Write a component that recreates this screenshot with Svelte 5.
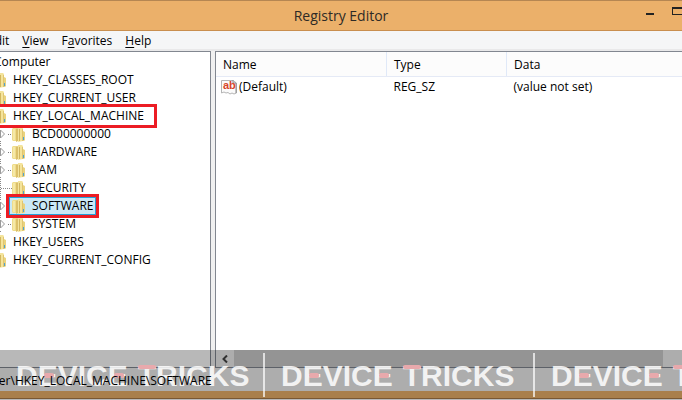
<script lang="ts">
	type Key = {
		name: string;
		leaf?: boolean;
		children?: Key[];
	};

	const menus = [
		{ before: '', key: 'F', after: 'ile' },
		{ before: '', key: 'E', after: 'dit' },
		{ before: '', key: 'V', after: 'iew' },
		{ before: 'F', key: 'a', after: 'vorites' },
		{ before: '', key: 'H', after: 'elp' }
	];

	const root: Key = {
		name: 'Computer',
		children: [
			{ name: 'HKEY_CLASSES_ROOT' },
			{ name: 'HKEY_CURRENT_USER' },
			{
				name: 'HKEY_LOCAL_MACHINE',
				children: [
					{ name: 'BCD00000000' },
					{ name: 'HARDWARE' },
					{ name: 'SAM' },
					{ name: 'SECURITY', leaf: true },
					{ name: 'SOFTWARE' },
					{ name: 'SYSTEM' }
				]
			},
			{ name: 'HKEY_USERS' },
			{ name: 'HKEY_CURRENT_CONFIG' }
		]
	};

	const values = [{ name: '(Default)', type: 'REG_SZ', data: '(value not set)' }];
	const marked = ['HKEY_LOCAL_MACHINE', 'SOFTWARE'];

	let selected = $state('SOFTWARE');
</script>

{#snippet folder()}
	<svg class="folder" viewBox="0 0 13 15" aria-hidden="true">
		<path d="M0 2 L1 1 H5 V14 H1 L0 13Z" fill="#efdc8a" />
		<path d="M1 2 H3 V13 H1Z" fill="#f5e8a8" />
		<path d="M4 2 L6 1 V14 L4 15Z" fill="#dcc06a" />
		<path d="M6 0 H10 L11 1 V14 L6 15Z" fill="#f4e49c" />
		<path d="M7 2 H8 V14 H7Z" fill="#d3b75f" />
		<path d="M10 2 L11 2 V14 H10Z" fill="#e0c570" />
		<path d="M11 4 L13 5 V13 L12 14 H11Z" fill="#ead37e" />
		<path d="M11 10 H12 V13 H11Z" fill="#4da3d4" />
	</svg>
{/snippet}

{#snippet node(item: Key)}
	<li>
		<div class="row">
			<span class="branch" class:leaf={item.leaf}>
				{#if !item.leaf}
					<svg viewBox="0 0 8 18" aria-hidden="true">
						<path d="M3 0h1v1H3zM3 2h1v1H3zM3 16h1v1H3z" fill="#888" />
						<path d="M3.5 5 L7.5 9 L3.5 13Z" fill="#fff" stroke="#9a9a9a" />
					</svg>
				{/if}
			</span>
			<button
				class="label"
				class:selected={selected === item.name}
				class:marked={marked.includes(item.name)}
				class:wide={item.children}
				onclick={() => (selected = item.name)}
			>
				{@render folder()}
				<span>{item.name}</span>
			</button>
		</div>
		{#if item.children}
			<ul>
				{#each item.children as child}
					{@render node(child)}
				{/each}
			</ul>
		{/if}
	</li>
{/snippet}

<div class="page">
	<div class="window">
		<header class="titlebar">
			<h1>Registry Editor</h1>
			<div class="controls">
				<button aria-label="Minimize">
					<svg width="12" height="10" viewBox="0 0 12 10"><path d="M2 6h8v2H2z" fill="#222" /></svg>
				</button>
				<button aria-label="Maximize">
					<svg width="12" height="10" viewBox="0 0 12 10">
						<path d="M0 0h12v8H0zM1 2v5h10V2z" fill="#222" fill-rule="evenodd" />
					</svg>
				</button>
				<button class="close" aria-label="Close">
					<svg width="10" height="10" viewBox="0 0 10 10"><path d="M1 1l8 8M9 1l-8 8" stroke="#fff" stroke-width="2" /></svg>
				</button>
			</div>
		</header>

		<nav class="menubar">
			{#each menus as menu}
				<button>{menu.before}<u>{menu.key}</u>{menu.after}</button>
			{/each}
		</nav>

		<main class="panes">
			<section class="pane">
				<ul class="tree">
					{@render node(root)}
				</ul>
			</section>

			<section class="pane list">
				<table>
					<thead>
						<tr>
							<th class="name">Name</th>
							<th class="type">Type</th>
							<th>Data</th>
						</tr>
					</thead>
					<tbody>
						{#each values as value}
							<tr>
								<td class="name">
									<span class="value">
										<svg width="16" height="16" viewBox="0 0 16 16" aria-hidden="true">
											<path d="M0.5 1.5H12L15.500 4V14L13 15L11 14L9 15L7 13.500L5 14L3 13L0.500 14Z" fill="#fbfbfb" stroke="#b5b5b5" />
											<path d="M12 1V4H15V14" fill="none" stroke="#8c8c8c" />
											<text x="2" y="10">ab</text>
										</svg>
										{value.name}
									</span>
								</td>
								<td>{value.type}</td>
								<td>{value.data}</td>
							</tr>
						{/each}
					</tbody>
				</table>
				<div class="scrollbar">
					<button aria-label="Scroll left">
						<svg width="8" height="8" viewBox="0 0 8 8"><path d="M6 0.5 L2.500 4 L6 7.500" fill="none" stroke="#444" stroke-width="2" /></svg>
					</button>
					<div class="thumb"></div>
				</div>
			</section>
		</main>

		<footer class="status"><span>Computer\HKEY_LOCAL_MACHINE\SOFTWARE</span></footer>
	</div>

	<div class="watermark">
		{#each [1, 2, 3] as copy (copy)}
			<div class="brand">
				<span>D<i class="dash">E</i>VIC<i class="dash">E</i></span>
				<span><i class="bar">T</i>RICKS</span>
			</div>
		{/each}
	</div>
</div>

<style>
	:global(body) {
		margin: 0;
		background: #fff;
	}

	.page {
		position: relative;
		overflow: hidden;
		height: 100vh;
		font-family: 'Open Sans', 'Noto Sans', sans-serif;
		font-size: 12px;
		color: #000;
	}

	/* the window is larger than the page and runs off both sides */
	.window {
		box-sizing: border-box;
		display: flex;
		flex-direction: column;
		height: calc(100vh - 1px);
		margin: 0 -56px;
		padding: 0 8px 7px;
		background: #ebb06a;
		border-top: 1px solid #b58652;
		border-bottom: 1px solid #a87b49;
	}

	button {
		padding: 0;
		border: 0;
		background: none;
		font: inherit;
		color: inherit;
	}

	.titlebar {
		display: grid;
		grid-template-columns: 1fr auto 1fr;
		height: 29px;
		margin: 0 -8px;
		border-bottom: 1px solid #c98f4f;
	}

	h1 {
		grid-column: 2;
		margin: 0;
		font-size: 14px;
		font-weight: 400;
		line-height: 30px;
		color: #2e2a26;
	}

	.controls {
		display: flex;
		justify-content: flex-end;
	}

	.controls button {
		width: 28px;
		height: 22px;
	}

	.controls .close {
		width: 46px;
		background: #c75050;
	}

	.controls svg {
		display: block;
		margin: 0 auto;
	}

	.menubar {
		display: flex;
		height: 18px;
		background: #f5f6f7;
		border-bottom: 2px solid #e9e9ea;
	}

	.menubar button {
		padding: 0 6px 0 7px;
		line-height: 20px;
	}

	.menubar button:first-child {
		padding-left: 4px;
	}

	u {
		text-underline-offset: 2px;
	}

	.panes {
		flex: 1;
		display: grid;
		grid-template-columns: 259px 1fr;
		gap: 4px;
		background: #f0f0f0;
	}

	.pane {
		min-width: 0;
		background: #fff;
		border: 1px solid #828790;
	}

	ul {
		margin: 0;
		padding: 0 0 0 19px;
		list-style: none;
	}

	.tree {
		padding: 1px 0 0 2px;
	}

	.row {
		display: flex;
		height: 18px;
	}

	.branch {
		display: flex;
		align-items: center;
		width: 19px;
		margin-right: -3px;
		background: linear-gradient(90deg, #fff 15px, transparent 15px) 0 0 / 100% 100% no-repeat,
			repeating-linear-gradient(90deg, #777 0 1px, #fff 1px 2px) 1px 9px / 100% 1px no-repeat;
	}

	.branch svg {
		width: 8px;
		height: 18px;
		margin-left: 4px;
	}

	.branch.leaf {
		background: repeating-linear-gradient(#888 0 1px, #fff 1px 2px) 7px 0 / 1px 100% no-repeat,
			repeating-linear-gradient(90deg, #888 0 1px, #fff 1px 2px) 8px 9px / 100% 1px no-repeat;
	}

	.label {
		position: relative;
		display: flex;
		align-items: center;
		gap: 7px;
		padding: 0 2px;
		border: 1px solid transparent;
		line-height: 16px;
	}

	.label.selected {
		background: #cbe8f6;
		border-color: #26a0da;
	}

	.label.marked {
		z-index: 1;
	}

	.label.marked::after {
		content: '';
		position: absolute;
		inset: -4px;
		border: 3px solid #ec1c24;
	}

	.label.marked.wide::after {
		right: -11px;
	}

	.folder {
		flex: none;
		width: 13px;
		height: 15px;
	}

	.list {
		display: flex;
		flex-direction: column;
		justify-content: space-between;
	}

	table {
		width: 100%;
		table-layout: fixed;
		border-collapse: collapse;
	}

	th,
	td {
		height: 20px;
		padding: 0 7px;
		font-weight: 400;
		line-height: 20px;
		text-align: left;
		white-space: nowrap;
	}

	th {
		height: 23px;
		padding-top: 1px;
		background: #fcfcfc;
		border-right: 1px solid #e0e9f8;
		border-bottom: 1px solid #e5eaf6;
	}

	.name {
		width: 156px;
	}

	.type {
		width: 105px;
	}

	.value {
		display: flex;
		align-items: center;
		gap: 2px;
		margin-left: -2px;
	}

	.value text {
		font: bold 11px 'Liberation Sans', sans-serif;
		fill: #d8452a;
	}

	.scrollbar {
		display: flex;
		height: 17px;
		padding-right: 66px;
		background: #f0f0f0;
	}

	.scrollbar button {
		display: grid;
		place-items: center;
		width: 18px;
	}

	.thumb {
		flex: 1;
		background: #cdcdcd;
	}

	.status {
		height: 23px;
		padding-left: 2px;
		background: #f0f0f0;
		line-height: 25px;
	}

	.status span {
		position: relative;
		z-index: 2;
	}

	.watermark {
		position: absolute;
		inset: auto 0 0;
		display: flex;
		height: 50px;
		overflow: hidden;
		background: rgba(0, 0, 0, 0.28);
		font-family: 'Liberation Sans', Arial, sans-serif;
		font-size: 30px;
		font-weight: 700;
		line-height: 50px;
		color: rgba(255, 255, 255, 0.85);
	}

	.brand {
		box-sizing: border-box;
		flex: none;
		display: flex;
		gap: 10px;
		width: 270px;
		height: 44px;
		margin-top: 3px;
		padding-left: 16px;
		border-right: 2px solid rgba(255, 255, 255, 0.7);
	}

	.brand:first-child {
		width: 265px;
	}

	.brand span {
		line-height: 46px;
	}

	.brand i {
		position: relative;
		font-style: normal;
	}

	.brand i::after {
		content: '';
		position: absolute;
		left: 6px;
		width: 10px;
		height: 5px;
		border-radius: 2px;
		background: #e8a9ac;
	}

	.brand .dash::after {
		top: 14px;
	}

	.brand .bar::after {
		top: 6px;
		left: 0;
		width: 18px;
		height: 4px;
	}
</style>
